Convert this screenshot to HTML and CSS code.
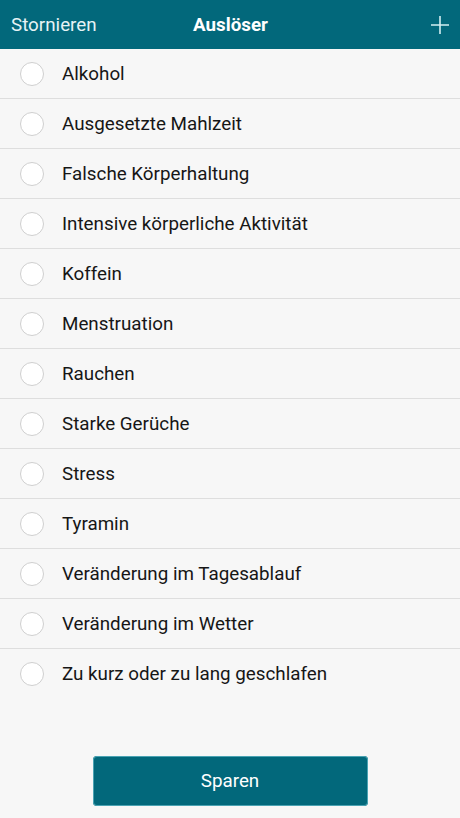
FILE: index.html
```html
<!DOCTYPE html>
<html lang="de">
<head>
<meta charset="utf-8">
<title>Auslöser</title>
<link rel="stylesheet" href="styles.css">
</head>
<body>
<div class="app">
  <header class="bar">
    <span class="cancel">Stornieren</span>
    <span class="title">Auslöser</span>
    <span class="add">
      <svg width="20" height="20" viewBox="0 0 20 20"><path d="M10 1V19M1 10H19" stroke="#d4eef2" stroke-width="1.6" fill="none"/></svg>
    </span>
  </header>
  <ul class="list">
    <li class="row"><span class="radio"></span><span class="label">Alkohol</span></li>
    <li class="row"><span class="radio"></span><span class="label">Ausgesetzte Mahlzeit</span></li>
    <li class="row"><span class="radio"></span><span class="label">Falsche Körperhaltung</span></li>
    <li class="row"><span class="radio"></span><span class="label">Intensive körperliche Aktivität</span></li>
    <li class="row"><span class="radio"></span><span class="label">Koffein</span></li>
    <li class="row"><span class="radio"></span><span class="label">Menstruation</span></li>
    <li class="row"><span class="radio"></span><span class="label">Rauchen</span></li>
    <li class="row"><span class="radio"></span><span class="label">Starke Gerüche</span></li>
    <li class="row"><span class="radio"></span><span class="label">Stress</span></li>
    <li class="row"><span class="radio"></span><span class="label">Tyramin</span></li>
    <li class="row"><span class="radio"></span><span class="label">Veränderung im Tagesablauf</span></li>
    <li class="row"><span class="radio"></span><span class="label">Veränderung im Wetter</span></li>
    <li class="row last"><span class="radio"></span><span class="label">Zu kurz oder zu lang geschlafen</span></li>
  </ul>
  <div class="footer">
    <button class="save">Sparen</button>
  </div>
</div>
</body>
</html>
```
FILE: styles.css
```css
html, body {
  margin: 0;
  padding: 0;
  height: 100%;
}
body {
  background: #f7f7f7;
  font-family: Roboto, "Noto Sans", sans-serif;
  color: #1a1a1a;
}
.app {
  display: flex;
  flex-direction: column;
  height: 100vh;
}
.bar {
  height: 49px;
  flex: none;
  background: #02687b;
  display: grid;
  grid-template-columns: 1fr auto 1fr;
  align-items: center;
  padding: 0 10px 0 11px;
  box-sizing: border-box;
  color: #e6f3f5;
}
.cancel {
  font-size: 18.8px;
  justify-self: start;
}
.title {
  font-size: 18.8px;
  font-weight: bold;
  color: #ffffff;
}
.add {
  justify-self: end;
  display: flex;
}
.list {
  list-style: none;
  margin: 0;
  padding: 0;
}
.row {
  height: 50px;
  box-sizing: border-box;
  border-bottom: 1px solid #dedede;
  display: flex;
  align-items: center;
  padding-left: 20px;
}
.row.last {
  border-bottom: none;
}
.radio {
  width: 24px;
  height: 24px;
  box-sizing: border-box;
  border: 1px solid #cfcfcf;
  border-radius: 50%;
  background: #ffffff;
  flex: none;
}
.label {
  margin-left: 18px;
  font-size: 18.8px;
  color: #161616;
}
.footer {
  flex: 1;
  display: flex;
  align-items: flex-end;
  justify-content: center;
  padding-bottom: 12px;
}
.save {
  width: 275px;
  height: 50px;
  border: none;
  border-radius: 4px;
  background: #02687b;
  color: #ffffff;
  font-family: Roboto, "Noto Sans", sans-serif;
  font-size: 18.8px;
  box-shadow: 0 0 0 1px #4aa3b3 inset;
}
```
